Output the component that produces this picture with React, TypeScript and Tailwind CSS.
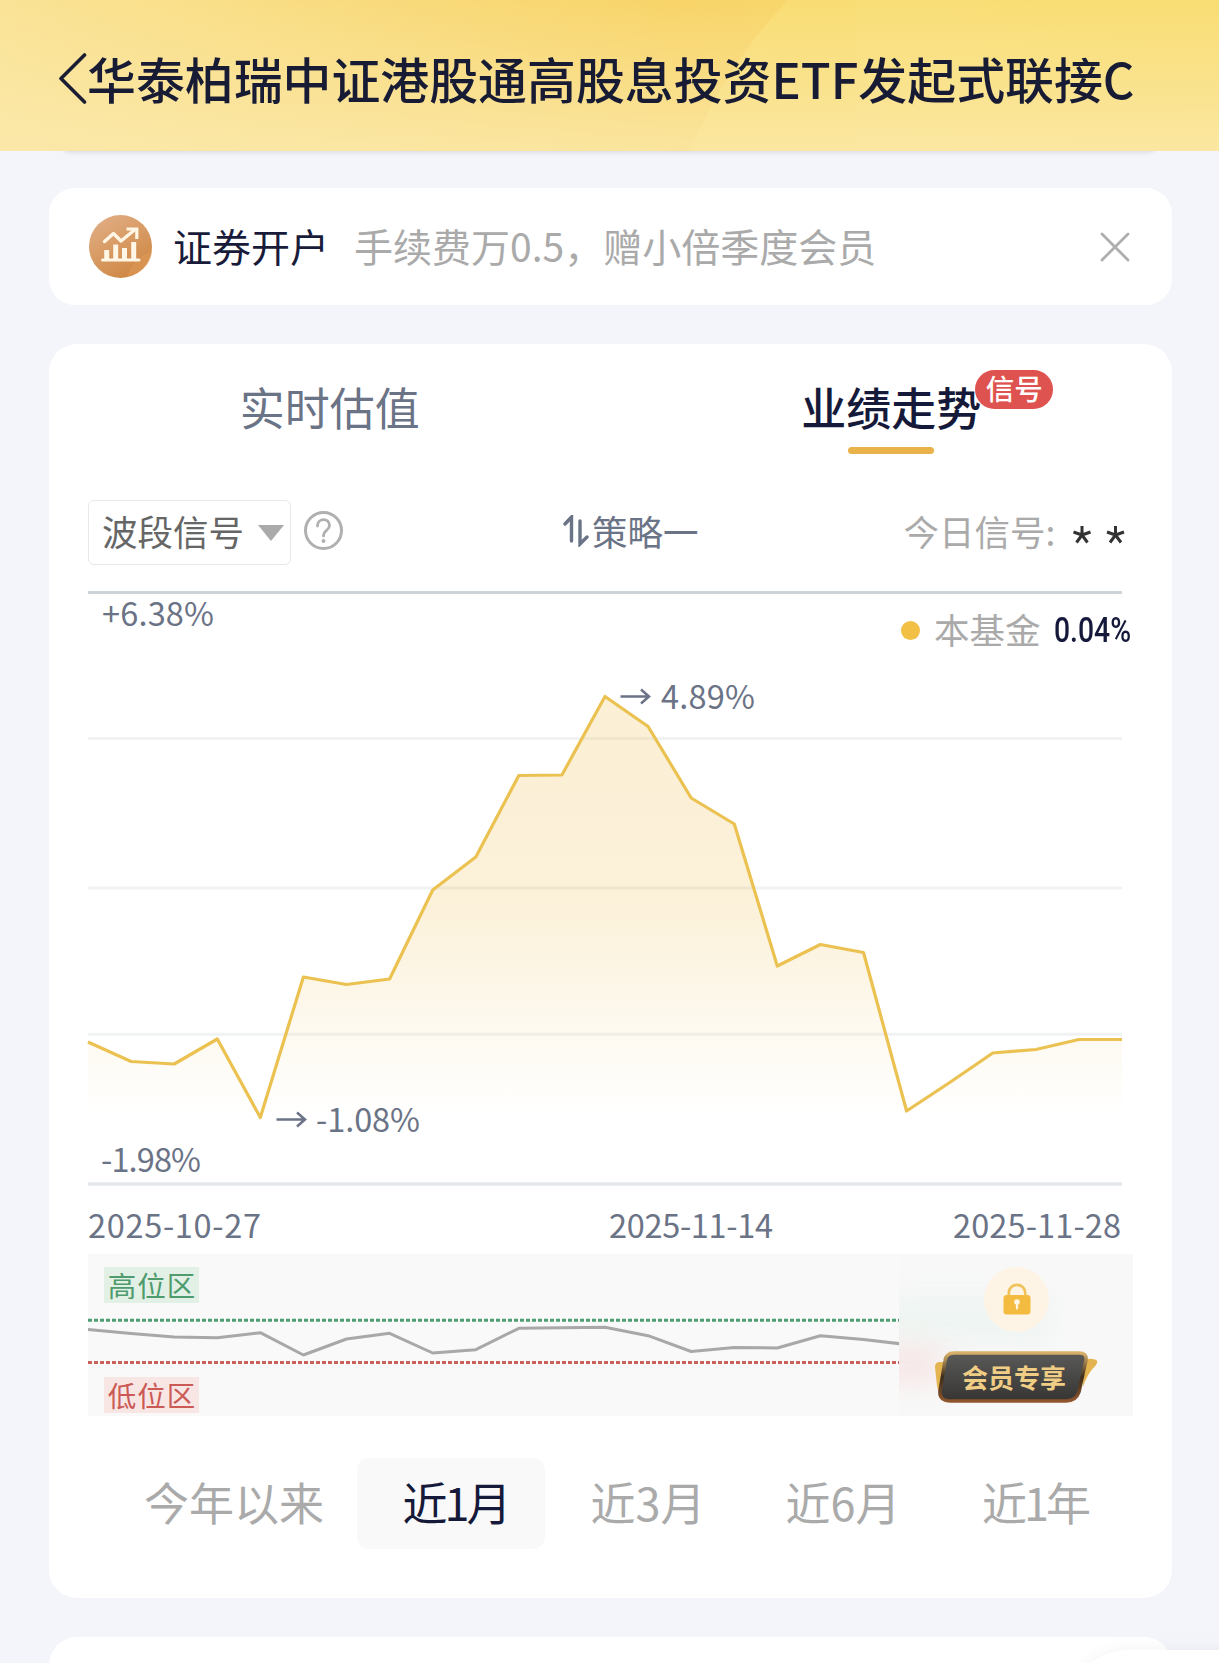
import { X } from "lucide-react";
import React from "react";

const STEP = 1034 / 24;

// vertical position of every trading day inside the chart
const fundLine = [
  452, 471.5, 474, 449, 527.5, 387, 394.5, 389, 300, 267, 185.5, 185, 106.5,
  136.5, 208, 234, 376, 354.5, 362.5, 521, 492.5, 463, 459.5, 449.5, 449.5,
];

const signalLine = [
  75.5, 79.5, 83, 83.7, 78.7, 101, 85, 79.3, 99, 95.7, 74.3, 73.7, 73.3, 81.7,
  97.5, 93.5, 94, 81.7, 85.5, 90.5,
];

const periods = [
  { label: "今年以来", className: "w-[246px]" },
  { label: "近1月", className: "w-[188px] pl-[9px] tracking-[-3px]" },
  { label: "近3月", className: "w-[206px]" },
  { label: "近6月", className: "w-[184px]" },
  { label: "近1年", className: "w-[200px] tracking-[-3px]" },
];

const toPoints = (values: number[]) =>
  values.map((y, i) => `${(i * STEP).toFixed(1)},${y}`).join(" ");

const Header = () => (
  <header className="relative h-[151px] w-full shrink-0">
    <div className="absolute bottom-0 left-[62px] h-4 w-[1094px] rounded-lg shadow-[0_1px_5px_rgba(80,90,110,0.2)]" />
    <svg
      className="absolute inset-0"
      width="1219"
      height="151"
      preserveAspectRatio="none"
    >
      <defs>
        <linearGradient id="head" x1="0" y1="0" x2="1" y2="0">
          <stop offset="0" stopColor="#fae396" />
          <stop offset="0.56" stopColor="#f8d468" />
          <stop offset="1" stopColor="#f9de74" />
        </linearGradient>
        <linearGradient id="headRight" x1="0" y1="0" x2="1" y2="0">
          <stop offset="0" stopColor="#f9dd74" />
          <stop offset="1" stopColor="#f9dc70" />
        </linearGradient>
        <linearGradient id="headFade" x1="0" y1="0" x2="0" y2="1">
          <stop offset="0" stopColor="#fbeab0" stopOpacity="0" />
          <stop offset="1" stopColor="#fbeab0" stopOpacity="0.75" />
        </linearGradient>
      </defs>
      <rect width="1219" height="151" fill="url(#head)" />
      <path d="M788 0Q728 62 690 151H1219V0Z" fill="url(#headRight)" />
      <path d="M854 0Q858 80 852 151H1219V0Z" fill="#fae07a" opacity="0.35" />
      <rect width="1219" height="151" fill="url(#headFade)" />
    </svg>
    <div className="relative flex h-full items-center pl-[58px] pt-[5px]">
      <svg width="29" height="60" viewBox="0 0 29 60" fill="none">
        <path
          d="M26.500 7L3 30.500L26.500 54"
          stroke="#1b1d33"
          strokeWidth="3.600"
          strokeLinecap="round"
          strokeLinejoin="round"
        />
      </svg>
      <h1 className="whitespace-nowrap text-[48.9px] font-medium leading-none text-[#181b34]">
        华泰柏瑞中证港股通高股息投资ETF发起式联接C
      </h1>
    </div>
  </header>
);

const Promo = () => (
  <section className="flex h-[117px] items-center rounded-[26px] bg-white pl-10 pr-[38px]">
    <svg width="63" height="63" viewBox="0 0 63 63" fill="none">
      <defs>
        <linearGradient id="coin" x1="0" y1="0" x2="0.6" y2="1">
          <stop offset="0" stopColor="#e3b18a" />
          <stop offset="1" stopColor="#cf8845" />
        </linearGradient>
      </defs>
      <circle cx="31.500" cy="31.500" r="31.500" fill="url(#coin)" />
      <path d="M63 36Q45 42 38 62Q61 56 63 36Z" fill="#dd9a57" opacity="0.6" />
      <path
        d="M15.500 26.500L24.500 18.500L32 26L46 14.500"
        stroke="#fff6e6"
        strokeWidth="3.400"
        strokeLinecap="round"
        strokeLinejoin="round"
      />
      <path d="M37.500 14H47.800V24" stroke="#fff6e6" strokeWidth="3.200" />
      <path
        d="M17.700 35V45M26.700 29.500V45M35.500 33V45M44.700 27V45"
        stroke="#fff6e6"
        strokeWidth="5"
      />
      <path
        d="M13.500 45H50"
        stroke="#fff6e6"
        strokeWidth="3"
        strokeLinecap="round"
      />
    </svg>
    <p className="ml-[21px] pb-[3px] text-[39px] leading-none text-[#181c3a]">
      证券开户
    </p>
    <p className="ml-[25px] pb-[3px] text-[39px] leading-none text-[#aaaaaa]">
      手续费万0.5，赠小倍季度会员
    </p>
    <X
      className="-mr-[7px] ml-auto mt-[1px] text-[#aeaeae]"
      size={52}
      strokeWidth={1.3}
    />
  </section>
);

const Tabs = () => (
  <div className="flex h-[110px] shrink-0 text-[45px] leading-none">
    <div className="flex flex-1 justify-center pt-[40px] text-[#6b7386]">
      实时估值
    </div>
    <div className="flex flex-1 flex-col items-center pt-[40px]">
      <div className="relative font-medium text-[#161a3a]">
        业绩走势
        <span className="absolute left-[174px] top-[-14px] flex h-[39px] w-[78px] items-center justify-center whitespace-nowrap rounded-full bg-[#de534f] pb-[2px] text-[28.5px] leading-none text-white">
          信号
        </span>
      </div>
      <div className="mt-[18px] h-[7px] w-[86px] rounded-full bg-[#e9b24b]" />
    </div>
  </div>
);

const Toolbar = () => (
  <div className="mt-[46px] flex h-[65px] shrink-0 items-center text-[35.5px] leading-none">
    <div className="flex h-[65px] w-[203px] items-center rounded-[6px] border border-[#e6e9ea] pb-[4px] pl-[13px] text-[#666666]">
      波段信号
      <svg className="ml-[14px] mt-[4px]" width="26" height="16">
        <path d="M0 0H26L13 16Z" fill="#aaaaaa" />
      </svg>
    </div>
    <svg
      className="ml-3 mt-[-4px]"
      width="41"
      height="41"
      viewBox="0 0 41 41"
      fill="none"
    >
      <circle cx="20.500" cy="20.500" r="18" stroke="#b0b0b0" strokeWidth="3" />
      <path
        d="M14.500 16C14.500 7.500 26.500 7.500 26.500 15.500C26.500 20.500 20.500 20 20.500 26"
        stroke="#b0b0b0"
        strokeWidth="2.800"
        strokeLinecap="round"
      />
      <circle cx="20.500" cy="31" r="2" fill="#b0b0b0" />
    </svg>
    <div className="ml-[219px] flex items-center pb-[4px] text-[#6b7386]">
      <svg width="26" height="32" viewBox="0 0 26 32" fill="none">
        <path
          d="M2 9L8.500 2V26M17 6V29L24 22"
          stroke="#6b7386"
          strokeWidth="3.400"
          strokeLinecap="round"
        />
      </svg>
      <span className="ml-[3px]">策略一</span>
    </div>
    <div className="ml-[205px] flex items-center pb-[4px] text-[#aaaaaa]">
      今日信号:
      <svg
        className="ml-[17px] mt-[8px]"
        width="54"
        height="20"
        viewBox="0 0 54 20"
        stroke="#333333"
        strokeWidth="3"
      >
        <path d="M10 10V1M10 10L1.500 7M10 10L18.500 7M10 10L4.500 17.500M10 10L15.500 17.500" />
        <path d="M43.500 10V1M43.500 10L35 7M43.500 10L52 7M43.500 10L38 17.500M43.500 10L49 17.500" />
      </svg>
    </div>
  </div>
);

const FundChart = () => (
  <div className="relative mt-[25px] h-[596px] shrink-0">
    <svg
      className="overflow-visible"
      width="1034"
      height="596"
      viewBox="0 0 1034 596"
      fill="none"
    >
      <defs>
        <linearGradient
          id="area"
          gradientUnits="userSpaceOnUse"
          x1="0"
          y1="106"
          x2="0"
          y2="525"
        >
          <stop offset="0" stopColor="#f0c35c" stopOpacity="0.26" />
          <stop offset="0.5" stopColor="#f0c35c" stopOpacity="0.23" />
          <stop offset="1" stopColor="#f0c35c" stopOpacity="0" />
        </linearGradient>
      </defs>
      <path
        d="M0 148.500H1034M0 298H1034M0 444.300H1034"
        stroke="#f0f2f4"
        strokeWidth="3"
      />
      <path d="M0 2.500H1034" stroke="#ccd4d9" strokeWidth="3" />
      <path d="M0 594H1034" stroke="#e4e7eb" strokeWidth="3.500" />
      <polygon points={`0,525 ${toPoints(fundLine)} 1034,525`} fill="url(#area)" />
      <polyline
        points={toPoints(fundLine)}
        stroke="#ebc251"
        strokeWidth="3.200"
        strokeLinejoin="round"
      />
      <path
        d="M532.500 106.500H561M553 99.500L561 106.500L553 113.500M188.500 529.500H217M209 522.500L217 529.500L209 536.500"
        stroke="#6b7386"
        strokeWidth="2.500"
      />
      <g fill="#6b7386" fontSize="32.500">
        <text x="14" y="36" textLength="112">
          +6.38%
        </text>
        <text x="573" y="119" textLength="94">
          4.89%
        </text>
        <text x="228" y="542" textLength="104">
          -1.08%
        </text>
        <text x="13" y="581.500" textLength="100">
          -1.98%
        </text>
      </g>
    </svg>
    <div className="absolute left-[813px] top-[21px] flex items-center whitespace-nowrap leading-none">
      <span className="h-[19px] w-[19px] rounded-full bg-[#f1c044]" />
      <span className="ml-[14px] pb-[3px] text-[35.5px] text-[#aaaaaa]">
        本基金
      </span>
      <span className="ml-[13px] w-[80px] origin-left scale-x-[0.81] font-['Roboto'] text-[35px] font-medium text-[#161a3a]">
        0.04%
      </span>
    </div>
  </div>
);

const Dates = () => (
  <svg
    className="shrink-0"
    width="1034"
    height="68"
    fill="#6b7386"
    fontSize="32.500"
  >
    <text x="0" y="51.500" textLength="173">
      2025-10-27
    </text>
    <text x="521" y="51.500" textLength="164">
      2025-11-14
    </text>
    <text x="865" y="51.500" textLength="168">
      2025-11-28
    </text>
  </svg>
);

const MemberBadge = () => (
  <div className="absolute left-[846px] top-[95px] h-[58px] w-[166px]">
    <svg width="166" height="58" viewBox="0 0 166 58" fill="none">
      <defs>
        <linearGradient id="plate" x1="0" y1="0" x2="0" y2="1">
          <stop offset="0" stopColor="#5a5a58" />
          <stop offset="1" stopColor="#363533" />
        </linearGradient>
        <linearGradient id="rim" x1="0" y1="0" x2="0" y2="1">
          <stop offset="0" stopColor="#d9b069" />
          <stop offset="0.5" stopColor="#3c2c1a" />
          <stop offset="1" stopColor="#8f552c" />
        </linearGradient>
      </defs>
      <path d="M1 18Q1 13 6 13H13L9 47Q4 44 3 37Z" fill="#e3b450" />
      <path d="M150 11Q155 9 161 10.500Q165 11.500 162 16Q153 25 149 38Z" fill="#e3b450" />
      <path
        d="M20 4H145Q153 4 152 11L145 43Q142 52 132 52H17Q5 52 6 42L11 12Q12 4 20 4Z"
        fill="url(#plate)"
        stroke="url(#rim)"
        strokeWidth="3.500"
      />
    </svg>
    <span className="absolute left-[28px] top-[15px] whitespace-nowrap text-[26px] font-bold leading-none text-[#f0cd84]">
      会员专享
    </span>
  </div>
);

const SignalPanel = () => (
  <div className="relative h-[162px] w-[1045px] shrink-0 overflow-hidden bg-[#f9f9f9]">
    <svg width="811" height="162" fill="none">
      <path
        d="M0 66.300H811"
        stroke="#4f9d73"
        strokeWidth="3"
        strokeDasharray="4 2"
      />
      <path
        d="M0 108.500H811"
        stroke="#c8605c"
        strokeWidth="3"
        strokeDasharray="4 2"
      />
      <polyline
        points={toPoints(signalLine)}
        stroke="#a8a8a8"
        strokeWidth="3"
        strokeLinejoin="round"
      />
    </svg>
    <span className="absolute left-4 top-[13px] flex h-[36px] w-[95px] items-center justify-center bg-[#e3f0e5] pl-[1px] text-[28.5px] leading-none tracking-[1px] text-[#4e9b6e]">
      高位区
    </span>
    <span className="absolute left-4 top-[123px] flex h-[36px] w-[95px] items-center justify-center bg-[#f8e6e5] pl-[1px] text-[28.5px] leading-none tracking-[1px] text-[#cb5a55]">
      低位区
    </span>
    {/* locked part, only a haze of the lines is left */}
    <div className="absolute left-[811px] top-0 h-full w-[234px] overflow-hidden bg-[#f8f8f8]">
      <div className="absolute left-[-20px] top-[48px] h-[34px] w-[170px] bg-[#e2f1ea] opacity-60 blur-lg" />
      <div className="absolute left-[-30px] top-[96px] h-[30px] w-[75px] bg-[#f6d3d3] opacity-60 blur-lg" />
    </div>
    <div className="absolute left-[896px] top-[13px] flex h-[65px] w-[65px] items-center justify-center rounded-full bg-[#fef4e5] pb-[2px]">
      <svg width="28" height="32" viewBox="0 0 28 32" fill="none">
        <path
          d="M5.800 13V10C5.800 -0.800 22.200 -0.800 22.200 10V13"
          stroke="#efc35a"
          strokeWidth="2.600"
        />
        <rect x="0.500" y="12" width="27" height="19.500" rx="3" fill="#f3bc40" />
        <circle cx="14" cy="19" r="2.800" fill="#fff6e4" />
        <path
          d="M14 19V25.500"
          stroke="#fff6e4"
          strokeWidth="2.200"
          strokeLinecap="round"
        />
      </svg>
    </div>
    <MemberBadge />
  </div>
);

const Periods = () => (
  <div className="ml-[23px] mt-[42px] flex h-[91px] shrink-0 text-[45px] leading-none text-[#aaaaaa]">
    {periods.map((item, index) => (
      <div
        key={item.label}
        className={`flex shrink-0 items-center justify-center pb-[4px] ${item.className} ${
          index === 1 ? "rounded-xl bg-[#f9f9f9] text-[#161a3a]" : ""
        }`}
      >
        {item.label}
      </div>
    ))}
  </div>
);

export default function App() {
  return (
    <div
      lang="zh-CN"
      className="relative flex h-[1663px] w-[1219px] flex-col overflow-hidden bg-[#f3f5fa] font-['Noto_Sans_CJK_SC',sans-serif]"
    >
      <Header />
      <main className="mt-[37px] flex flex-col pl-[49px] pr-[47px]">
        <Promo />
        <section className="mt-[39px] flex h-[1254px] flex-col rounded-[28px] bg-white">
          <Tabs />
          <div className="flex flex-col pl-[39px]">
            <Toolbar />
            <FundChart />
            <Dates />
            <SignalPanel />
            <Periods />
          </div>
        </section>
        <section className="mt-[39px] h-[80px] rounded-[28px] bg-white" />
      </main>
      <div className="absolute left-[1068px] top-[1650px] h-[120px] w-[220px] rounded-[60px] bg-white shadow-[0_0_14px_rgba(120,130,150,0.1)]" />
    </div>
  );
}
